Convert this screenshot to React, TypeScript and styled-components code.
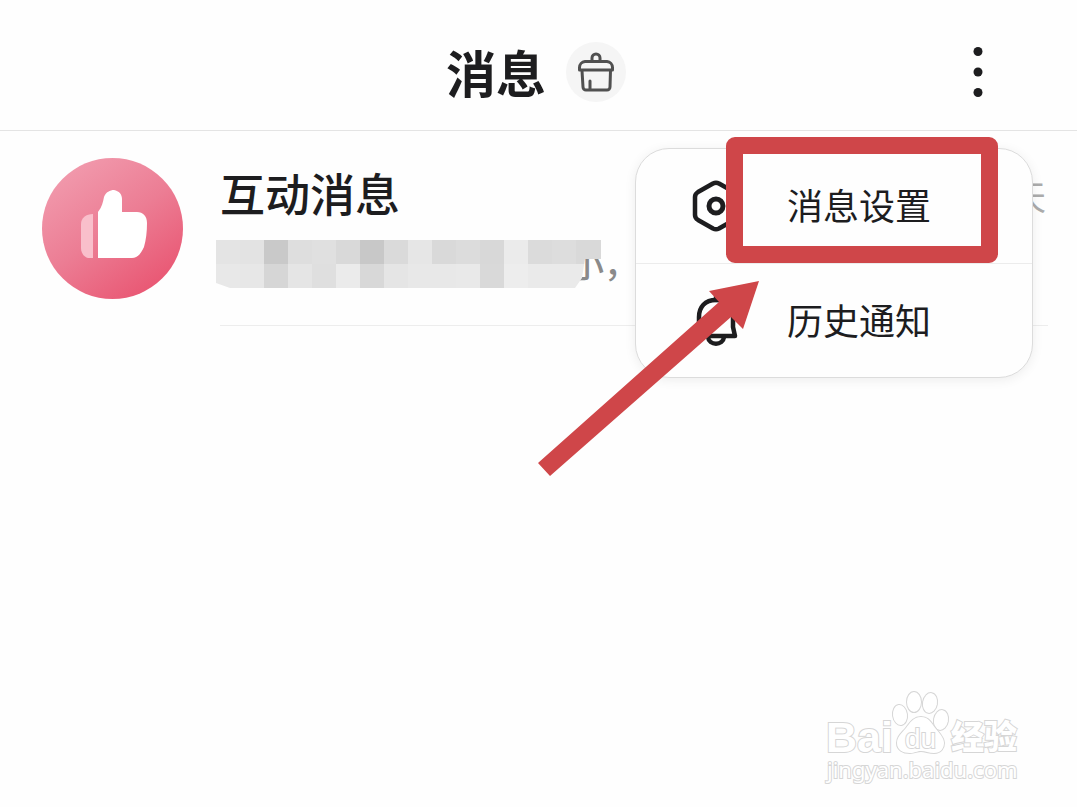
import React from 'react';
import styled, { createGlobalStyle } from 'styled-components';

const INK = '#1d1d1f';
const RED = '#cf4649';

const GlobalStyle = createGlobalStyle`
  *, *::before, *::after { box-sizing: border-box; }
  body {
    margin: 0;
    background: #fefefe;
    color: ${INK};
    font-family: "Noto Sans CJK SC", "Noto Sans", sans-serif;
  }
  button { font: inherit; color: inherit; background: none; border: 0; padding: 0; cursor: pointer; }
  svg { display: block; }
`;

const Page = styled.div`
  position: relative;
  display: flex;
  flex-direction: column;
  min-height: 100vh;
`;

const Header = styled.header`
  display: grid;
  grid-template-columns: 1fr auto 1fr;
  align-items: center;
  padding: 14px 84px 0 79px;
  height: 131px;
  border-bottom: 1px solid #e4e4e4;
`;

const TitleGroup = styled.div`
  grid-column: 2;
  display: flex;
  align-items: center;
  gap: 20px;
`;

const Title = styled.h1`
  margin: 0;
  padding-bottom: 2px;
  font-size: 50px;
  line-height: 60px;
  font-weight: 700;
`;

const CleanButton = styled.button`
  display: grid;
  place-items: center;
  width: 60px;
  height: 60px;
  border-radius: 50%;
  background: #f5f5f5;
`;

const MoreButton = styled.button`
  justify-self: end;
  display: grid;
  place-items: center;
  width: 30px;
  height: 60px;
`;

const Main = styled.main`
  position: relative;
  flex: 1;
`;

const List = styled.ul`
  list-style: none;
  margin: 0;
  padding: 0 29px 0 42px;
`;

const Row = styled.li`
  display: flex;
  gap: 37px;
`;

const Avatar = styled.svg`
  flex: none;
  width: 141px;
  height: 141px;
  margin-top: 27px;
`;

const RowBody = styled.div`
  flex: 1;
  display: flex;
  justify-content: space-between;
  height: 195px;
  padding: 32px 2px 0 0;
  border-bottom: 1px solid #ededed;
`;

const Name = styled.h2`
  margin: 0;
  font-size: 45px;
  line-height: 60px;
  font-weight: 500;
`;

const Preview = styled.p`
  position: relative;
  width: 418px;
  margin: 14px 0 0;
  text-align: right;
  font-size: 34px;
  line-height: 52px;
  font-weight: 500;
  color: #8a8a8a;
`;

const Mosaic = styled.svg`
  position: absolute;
  left: -4px;
  top: 3px;
`;

const Time = styled.time`
  margin-top: 9px;
  font-size: 34px;
  line-height: 48px;
  color: #ababab;
`;

const Menu = styled.div`
  position: absolute;
  top: 17px;
  right: 44px;
  width: 398px;
  border: 1px solid #dcdcdc;
  border-radius: 34px;
  background: #fefefe;
  box-shadow: 0 2px 12px rgba(0, 0, 0, 0.07);
`;

const MenuItem = styled.button`
  display: flex;
  align-items: center;
  gap: 46px;
  width: 100%;
  height: 114px;
  padding-left: 55px;
  font-size: 36px;
  line-height: 48px;

  & + & { border-top: 1px solid #ececec; }
`;

const MenuLabel = styled.span`
  padding-bottom: 4px;
`;

const Highlight = styled.div`
  position: absolute;
  top: -12px;
  left: 90px;
  width: 272px;
  height: 126px;
  border: 17px solid ${RED};
  border-radius: 9px;
  pointer-events: none;
`;

const Arrow = styled.svg`
  position: absolute;
  top: 130px;
  left: -100px;
  pointer-events: none;
`;

const Watermark = styled.svg`
  align-self: flex-end;
  margin: 0 50px 17px 0;
`;

const TOP_CELLS = ['#e4e4e4', '#e3e3e3', '#c9c9c9', '#dedede', '#e0e0e0', '#d9d9d9', '#c8c8c8', '#dadada', '#e6e6e6', '#d9d9d9', '#dcdcdc', '#d8d8d8', '#ebebeb', '#dbdbdb', '#dddddd', '#d9d9d9'];
const BOTTOM_CELLS = ['#e8e8e8', '#e7e7e7', '#d6d6d6', '#e5e5e5', '#dfdfdf', '#ebebeb', '#d8d8d8', '#e5e5e5', '#e8e8e8', '#e8e8e8', '#e9e9e9', '#d9d9d9', '#ededed', '#eaeaea', '#eaeaea', '#eaeaea'];

const MosaicCover = () => (
  <Mosaic width="385" height="48" viewBox="0 0 385 48" shapeRendering="crispEdges" aria-hidden="true">
    <clipPath id="cover">
      <path d="M0 0H385V19H369L366 38L359 48H14L0 43Z" />
    </clipPath>
    <g clipPath="url(#cover)">
      {TOP_CELLS.map((fill, i) => <rect key={i} x={i * 24} y="0" width="25" height="24" fill={fill} />)}
      {BOTTOM_CELLS.map((fill, i) => <rect key={i} x={i * 24} y="24" width="24" height="24" fill={fill} />)}
    </g>
  </Mosaic>
);

const CleanIcon = () => (
  <svg width="38" height="40" viewBox="0 0 38 40" fill="none" stroke="#505050" strokeWidth="3" strokeLinejoin="round" strokeLinecap="round" aria-hidden="true">
    <path d="M15 9V6a4 4 0 0 1 8 0v3" />
    <path d="M8 9.500H30a6 6 0 0 1 5.500 6V18H2.500V15.500A6 6 0 0 1 8 9.500Z" />
    <path d="M5 18.500L6 35a3 3 0 0 0 3 3H30a3 3 0 0 0 3-3L33.500 18.500M13 38V29" />
  </svg>
);

const MoreIcon = () => (
  <svg width="10" height="50" viewBox="0 0 10 50" fill={INK} aria-hidden="true">
    <circle cx="5" cy="4.500" r="4.500" />
    <circle cx="5" cy="25" r="4.500" />
    <circle cx="5" cy="45.500" r="4.500" />
  </svg>
);

const LikeAvatar = () => (
  <Avatar viewBox="0 0 141 141" aria-hidden="true">
    <defs>
      <linearGradient id="pink" x1="0.150" y1="0.100" x2="0.750" y2="0.950">
        <stop offset="0" stopColor="#f199ac" />
        <stop offset="0.500" stopColor="#ec7d94" />
        <stop offset="1" stopColor="#e95874" />
      </linearGradient>
    </defs>
    <circle cx="70.500" cy="70.500" r="70.500" fill="url(#pink)" />
    <path d="M51 56V100H46C42 99 39 95 39 90V66C39 60 44 56 51 56Z" fill="#f9bfcb" />
    <path d="M56 100V54C60 49 61 44 62 39C64 34 68 32 72 32C77 33 80 36 80 41V54H95C101 54 105 58 105 65C105 74 104 82 102 89C99 96 95 100 90 100Z" fill="#fff" />
  </Avatar>
);

const SettingsIcon = () => (
  <svg width="50" height="52" viewBox="0 0 50 52" fill="none" stroke={INK} strokeWidth="4.500" strokeLinejoin="round" aria-hidden="true">
    <path d="M22 3.500Q25 2 28 3.500L43 12Q46 14 46 17V35Q46 38 43 40L28 48.500Q25 50 22 48.500L7 40Q4 38 4 35V17Q4 14 7 12Z" />
    <circle cx="25" cy="26" r="7" strokeWidth="5" />
  </svg>
);

const BellIcon = () => (
  <svg width="50" height="52" viewBox="0 0 50 52" fill="none" stroke={INK} strokeWidth="4.500" strokeLinejoin="round" strokeLinecap="round" aria-hidden="true">
    <path d="M25 2V5" />
    <path d="M25 5C14 5 8 12 8 22V32L5 41H44L42 32V22C42 12 36 5 25 5Z" />
    <path d="M17 42C18 51 32 51 33 42" />
  </svg>
);

const BaiduWatermark = () => (
  <Watermark
    width="204" height="102" viewBox="0 0 204 102" fill="#fff" stroke="#d6d6d6" strokeWidth="2"
    fontFamily='"Liberation Sans", sans-serif' fontWeight="700" paintOrder="stroke"
    role="img" aria-label="Baidu 经验"
  >
    <text x="3" y="64" fontSize="43">Bai</text>
    <ellipse cx="77" cy="27" rx="7" ry="10" transform="rotate(-8 77 27)" />
    <ellipse cx="91" cy="14" rx="7" ry="10" />
    <ellipse cx="107" cy="15" rx="7" ry="10" transform="rotate(10 107 15)" />
    <ellipse cx="118" cy="32" rx="7" ry="10" transform="rotate(10 118 32)" />
    <path d="M98 29C90 29 87 35 83 40C78 46 74 49 74 55C74 62 80 65 87 65C92 65 94 63 98 63C102 63 106 65 111 65C118 65 121 60 121 55C121 50 117 46 113 41C108 35 106 29 98 29Z" />
    <text x="82" y="60" fontSize="28" fontWeight="400">du</text>
    <text x="128" y="61" fontSize="33" fontWeight="900" fontFamily='"Noto Sans CJK SC", sans-serif'>经验</text>
    <text x="4" y="90" fontSize="22" fontWeight="400" fontFamily='"Noto Sans", sans-serif'>jingyan.baidu.com</text>
  </Watermark>
);

const App: React.FC = () => (
  <Page>
    <GlobalStyle />
    <Header>
      <TitleGroup>
        <Title>消息</Title>
        <CleanButton aria-label="清除未读"><CleanIcon /></CleanButton>
      </TitleGroup>
      <MoreButton aria-label="更多"><MoreIcon /></MoreButton>
    </Header>
    <Main>
      <List>
        <Row>
          <LikeAvatar />
          <RowBody>
            <div>
              <Name>互动消息</Name>
              <Preview>小，<MosaicCover /></Preview>
            </div>
            <Time>天</Time>
          </RowBody>
        </Row>
      </List>
      <Menu>
        <MenuItem><SettingsIcon /><MenuLabel>消息设置</MenuLabel></MenuItem>
        <MenuItem><BellIcon /><MenuLabel>历史通知</MenuLabel></MenuItem>
        <Highlight />
        <Arrow width="224" height="198" viewBox="0 0 224 198" fill={RED} aria-hidden="true">
          <path d="M223 2L173 12L183 23L2 184L14 197L195 38L207 50Z" />
        </Arrow>
      </Menu>
    </Main>
    <BaiduWatermark />
  </Page>
);

export default App;
